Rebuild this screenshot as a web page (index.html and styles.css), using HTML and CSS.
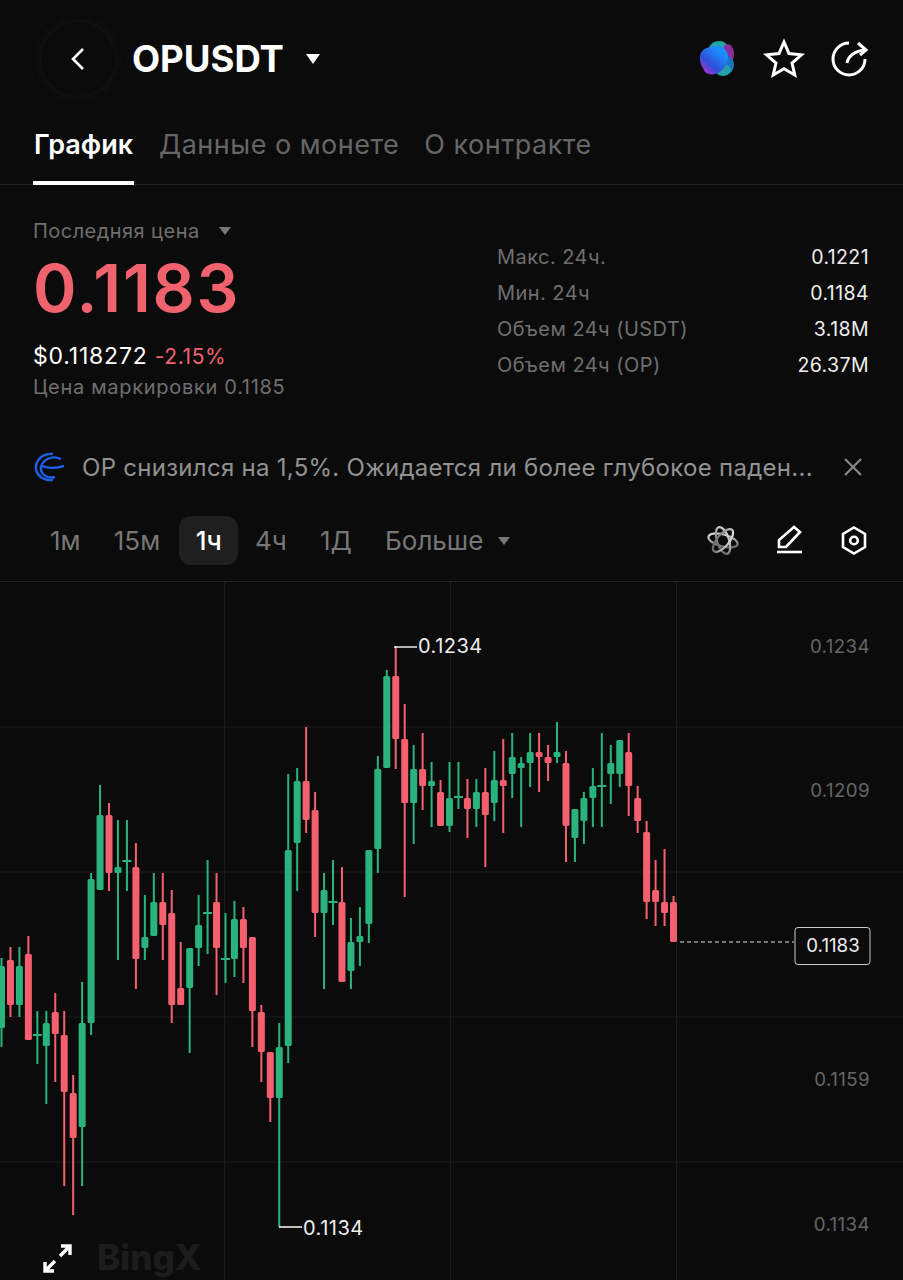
FILE: index.html
```html
<!DOCTYPE html>
<html lang="en">
<head>
    <meta charset="UTF-8">
    <meta name="viewport" content="width=device-width, initial-scale=1.0">
    <title>OPUSDT</title>
    <link rel="stylesheet" href="styles.css">
</head>
<body>
    <div class="page">
        <header class="topbar">
            <button class="back-btn">
                <svg width="20" height="30" viewBox="0 0 20 30"><path d="M15 5 L5 15 L15 25" fill="none" stroke="#fff" stroke-width="2.6"/></svg>
            </button>
            <h1 class="symbol">OPUSDT</h1>
            <span class="caret caret-title"></span>
            <div class="topbar-icons">
                <svg width="40" height="40" viewBox="0 0 40 40">
                    <defs>
                        <linearGradient id="blobMain" x1="0.1" y1="0.9" x2="0.7" y2="0.2">
                            <stop offset="0" stop-color="#b02fd0"/>
                            <stop offset="0.4" stop-color="#2f50d8"/>
                            <stop offset="1" stop-color="#1d8cff"/>
                        </linearGradient>
                    </defs>
                    <ellipse cx="22" cy="13" rx="11" ry="11" fill="#1fa7a5"/>
                    <ellipse cx="31" cy="15" rx="6" ry="10" fill="#8a2c9c"/>
                    <ellipse cx="30" cy="26" rx="7" ry="9" fill="#1b72c0"/>
                    <ellipse cx="26" cy="31" rx="8" ry="6" fill="#24a0a8"/>
                    <path d="M3 17 C4 10 11 8 18 7 C25 6 31 11 31 18 C31 24 28 28 25 31 C20 36 12 37 8 33 C6 29 2 24 3 17 Z" fill="url(#blobMain)"/>
                </svg>
                <svg width="42" height="42" viewBox="0 0 42 42"><path d="M21 4 L26 15.5 L38.5 16.8 L29 25 L31.8 37 L21 30.8 L10.2 37 L13 25 L3.5 16.8 L16 15.5 Z" fill="none" stroke="#fff" stroke-width="3" stroke-linejoin="miter"/></svg>
                <svg width="40" height="40" viewBox="0 0 40 40" fill="none" stroke="#fff" stroke-width="3"><path d="M19 4 A16 16 0 1 0 35 20"/><path d="M17 24 C18 17 25 12 35 11"/><path d="M28 4 L36 11 L30 16"/></svg>
            </div>
        </header>

        <nav class="tabs">
            <a class="tab active">График</a>
            <a class="tab">Данные о монете</a>
            <a class="tab">О контракте</a>
        </nav>

        <section class="summary">
            <div class="price-col">
                <div class="last-label">Последняя цена <span class="caret caret-gray"></span></div>
                <div class="last-price">0.1183</div>
                <div class="usd-line">$0.118272 <span class="down">-2.15%</span></div>
                <div class="mark-line">Цена маркировки 0.1185</div>
            </div>
            <div class="stats">
                <div class="stat"><span>Макс. 24ч.</span><b>0.1221</b></div>
                <div class="stat"><span>Мин. 24ч</span><b>0.1184</b></div>
                <div class="stat"><span>Объем 24ч (USDT)</span><b>3.18M</b></div>
                <div class="stat"><span>Объем 24ч (OP)</span><b>26.37M</b></div>
            </div>
        </section>

        <div class="news">
            <svg width="32" height="32" viewBox="0 0 32 32" fill="none" stroke="#1d5fe8" stroke-width="2.4"><path d="M20 3 C10 2 2 9 3 18 C4 25 11 30 20 29"/><path d="M28 8 C20 4 10 8 8 16 C7 23 14 28 22 26"/><path d="M9 15 C16 18 24 17 31 15"/></svg>
            <span class="news-text">OP снизился на 1,5%. Ожидается ли более глубокое паден...</span>
            <svg class="news-close" width="24" height="24" viewBox="0 0 24 24"><path d="M4 4 L20 20 M20 4 L4 20" stroke="#888" stroke-width="2.2"/></svg>
        </div>

        <div class="intervals">
            <a class="interval">1м</a>
            <a class="interval">15м</a>
            <a class="interval active">1ч</a>
            <a class="interval">4ч</a>
            <a class="interval">1Д</a>
            <a class="interval more">Больше <span class="caret caret-gray"></span></a>
            <div class="tools">
                <svg width="36" height="36" viewBox="0 0 36 36" fill="none" stroke-width="2.2">
                    <defs>
                        <linearGradient id="atomStroke" x1="0" y1="0" x2="1" y2="1">
                            <stop offset="0" stop-color="#eee"/>
                            <stop offset="1" stop-color="#555"/>
                        </linearGradient>
                    </defs>
                    <ellipse cx="18" cy="17.500" rx="15" ry="6" stroke="url(#atomStroke)" transform="rotate(15 18 17.500)"/>
                    <ellipse cx="18" cy="17.500" rx="14" ry="6" stroke="url(#atomStroke)" transform="rotate(72 18 17.500)"/>
                    <ellipse cx="18" cy="17.500" rx="14" ry="6" stroke="url(#atomStroke)" transform="rotate(130 18 17.500)"/>
                </svg>
                <svg width="36" height="36" viewBox="0 0 36 36" fill="none" stroke="#fff" stroke-width="2.6"><path d="M8 24 V17 L23 4 L29 9 L15 24 Z"/><path d="M6 29 H31"/></svg>
                <svg width="36" height="36" viewBox="0 0 36 36" fill="none" stroke="#fff" stroke-width="2.6"><path d="M18 4.5 L29 11 V24 L18 30.5 L7 24 V11 Z"/><circle cx="18" cy="17.5" r="3.8"/></svg>
            </div>
        </div>

        <div class="chart">
            <svg id="chart" width="903" height="698" viewBox="0 582 903 698">
                <g class="grid">
                    <path d="M0 727 H903 M0 872 H903 M0 1017 H903 M0 1162 H903 M224.500 582 V1280 M450.500 582 V1280 M676.500 582 V1280"/>
                </g>
                <text class="watermark" x="97" y="1270">BingX</text>
                <g id="candles"></g>
                <path class="marker" d="M395 648 V647 H417"/>
                <path class="marker" d="M279 1227 H302"/>
                <text class="extreme" x="418" y="653">0.1234</text>
                <text class="extreme" x="303" y="1235">0.1134</text>
                <text class="axis" x="870" y="653">0.1234</text>
                <text class="axis" x="870" y="797">0.1209</text>
                <text class="axis" x="870" y="1086">0.1159</text>
                <text class="axis" x="870" y="1231">0.1134</text>
                <path class="last-line" d="M680 942 H794"/>
                <rect class="last-box" x="795" y="927.500" width="75" height="37" rx="3"/>
                <text class="last-text" x="833" y="952">0.1183</text>
                <path class="expand" d="M70 1246 L60 1256 M45 1271 L55 1261 M61 1246 H70 V1255 M45 1262 V1271 H54"/>
            </svg>
        </div>
    </div>
    <script src="chart.js"></script>
</body>
</html>
```

FILE: styles.css
```css
* { box-sizing: border-box; }
html, body { margin: 0; background: #0b0b0b; }
body { font-family: Inter, "Liberation Sans", sans-serif; color: #fff; }
.page { width: 903px; height: 1280px; overflow: hidden; background: #0b0b0b; }

.topbar { display: flex; align-items: center; height: 118px; padding-left: 41px; }
.back-btn { display: flex; align-items: center; justify-content: center; width: 74px; height: 74px; padding: 0; border: 0; border-radius: 50%; background: #0b0b0b; box-shadow: 0 0 8px #1a1a1a; }
.symbol { margin: 0 0 0 17px; font-size: 36.500px; font-weight: 700; line-height: 40px; }
.caret { display: inline-block; width: 0; height: 0; border-left: 7px solid transparent; border-right: 7px solid transparent; border-top: 10px solid #fff; }
.caret-title { margin-left: 22px; }
.caret-gray { border-left-width: 6.500px; border-right-width: 6.500px; border-top: 8px solid #777; margin-left: 13px; vertical-align: 3px; }
.topbar-icons { display: flex; align-items: center; gap: 25.500px; margin-left: auto; padding-right: 33px; }

.tabs { display: flex; gap: 25px; height: 67px; padding-left: 33px; border-bottom: 1px solid #232323; }
.tab { height: 67px; padding-top: 10px; font-size: 27px; line-height: 34px; letter-spacing: 0.5px; font-weight: 400; color: #666; }
.tab.active { padding-left: 1px; padding-right: 1px; border-bottom: 4px solid #fff; color: #fff; font-weight: 600; letter-spacing: 0; }

.summary { display: flex; justify-content: space-between; height: 252px; padding: 33px 34px 0 33px; }
.last-label { font-size: 20px; line-height: 26px; letter-spacing: 0.45px; color: #6f6f6f; }
.last-price { margin-top: 10px; font-size: 66px; line-height: 68px; font-weight: 600; letter-spacing: 1.700px; color: #f1626f; }
.usd-line { margin-top: 21px; font-size: 23px; line-height: 26px; letter-spacing: 0.8px; }
.down { color: #f1626f; font-size: 21px; letter-spacing: 0.6px; }
.mark-line { margin-top: 4px; font-size: 20px; line-height: 26px; letter-spacing: 0.7px; color: #6f6f6f; }
.stats { display: flex; flex-direction: column; width: 372px; padding-top: 21px; }
.stat { display: flex; justify-content: space-between; align-items: center; height: 36px; font-size: 20px; letter-spacing: 0.45px; color: #6f6f6f; }
.stat b { font-weight: 400; font-size: 19.500px; letter-spacing: 0.4px; color: #eee; }

.news { display: flex; align-items: center; height: 60px; padding: 0 38px 0 33px; }
.news-text { margin-left: 17px; font-size: 24px; letter-spacing: 0.28px; color: #929292; white-space: nowrap; }
.news-close { margin-left: auto; }

.intervals { display: flex; align-items: center; height: 49px; margin-top: 19px; padding: 0 31px 0 33px; }
.interval { display: flex; align-items: center; height: 49px; padding: 0 16.600px; font-size: 26px; color: #777; border-radius: 12px; white-space: pre; }
.interval:first-child { padding-left: 17px; }
.interval.active { margin-left: 2.500px; padding: 0 16.500px; background: #1f1f1f; color: #fff; font-weight: 500; }
.interval.more .caret { margin-left: 7px; vertical-align: 0; }
.tools { display: flex; align-items: center; gap: 29.500px; margin-left: auto; }

.chart { margin-top: 16px; border-top: 1px solid #232323; }
.chart svg { display: block; }
.grid path { stroke: #1c1c1c; stroke-width: 1; fill: none; }
.watermark { font-family: Inter, sans-serif; font-size: 35px; font-weight: 800; fill: #1c1c1c; }
.marker { stroke: #eee; stroke-width: 1.600; fill: none; }
.extreme { font-size: 20px; letter-spacing: 0.5px; fill: #eee; }
.axis { font-size: 18.700px; letter-spacing: 0.4px; fill: #666; text-anchor: end; }
.last-line { stroke: #ddd; stroke-width: 1.200; stroke-dasharray: 4 3; fill: none; }
.last-box { stroke: #ccc; stroke-width: 1; fill: #0b0b0b; }
.last-text { font-size: 18.700px; fill: #eee; text-anchor: middle; }
.expand { stroke: #fff; stroke-width: 3.400; fill: none; }
```

FILE: chart.js
```javascript
// color, high, body top, body bottom, low
const candles = [
    ['g',958,966,1028,1047],['r',947,960,1005,1017],['g',947,966,1005,1017],['r',936,954,1040,1040],
    ['g',1011,1035,1035,1064],['g',1011,1023,1046,1104],['r',993,1012,1034,1082],['r',1011,1035,1092,1186],
    ['r',1075,1093,1138,1215],['g',982,1023,1127,1186],['g',873,879,1023,1035],['g',785,815,890,890],
    ['r',803,815,873,891],['g',820,867,873,960],['g',820,861,861,891],['r',843,867,959,989],
    ['g',895,937,948,960],['g',873,902,936,936],['r',873,902,925,960],['r',890,913,1005,1023],
    ['r',942,988,1005,1005],['g',948,948,988,1053],['g',895,925,948,966],['g',860,913,913,954],
    ['r',873,902,948,995],['g',913,959,959,983],['g',901,919,959,977],['r',907,919,948,983],
    ['r',937,937,1011,1047],['r',1005,1012,1052,1082],['r',1052,1052,1098,1122],['g',1023,1047,1098,1227],
    ['g',774,850,1046,1063],['g',768,781,843,891],['r',727,781,820,833],['r',792,810,913,937],
    ['g',873,890,913,989],['g',860,902,902,925],['r',867,902,982,982],['g',918,942,971,989],
    ['g',907,936,942,966],['g',850,850,924,943],['g',756,769,849,873],['g',670,676,768,768],
    ['r',646,676,739,769],['r',704,739,803,897],['g',745,769,803,844],['r',733,769,786,810],
    ['g',762,781,786,827],['r',780,792,826,826],['g',762,798,826,832],['g',762,797,797,809],
    ['r',779,798,809,838],['g',779,792,809,827],['r',768,792,815,867],['g',751,780,803,821],
    ['r',739,780,786,833],['g',733,757,774,798],['g',757,763,768,827],['g',733,752,763,787],
    ['r',733,752,757,792],['r',745,757,763,781],['g',722,752,757,763],['r',751,763,826,862],
    ['g',809,809,838,862],['g',792,798,821,844],['g',768,786,798,827],['g',733,786,786,827],
    ['g',745,763,774,804],['g',740,740,774,787],['r',733,752,786,816],['r',786,798,821,833],
    ['r',821,832,902,919],['r',860,890,902,926],['r',849,902,913,926],['r',896,902,942,942]
];

const colors = { g: '#2bb37e', r: '#f4606f' };
const stepX = (673.5 - 1.5) / (candles.length - 1);
let markup = '';

candles.forEach((c, i) => {
    const x = 1.5 + i * stepX;
    const fill = colors[c[0]];
    markup += `<rect x="${x - 1}" y="${c[1]}" width="2" height="${c[4] - c[1]}" fill="${fill}"/>`;
    if (c[2] === c[3]) {
        // doji, just a short dash
        markup += `<rect x="${x - 4.5}" y="${c[2] - 1}" width="9" height="2" fill="${fill}"/>`;
    } else {
        markup += `<rect x="${x - 3.5}" y="${c[2]}" width="7" height="${c[3] - c[2]}" rx="1.5" fill="${fill}"/>`;
    }
});

document.getElementById('candles').innerHTML = markup;
```
